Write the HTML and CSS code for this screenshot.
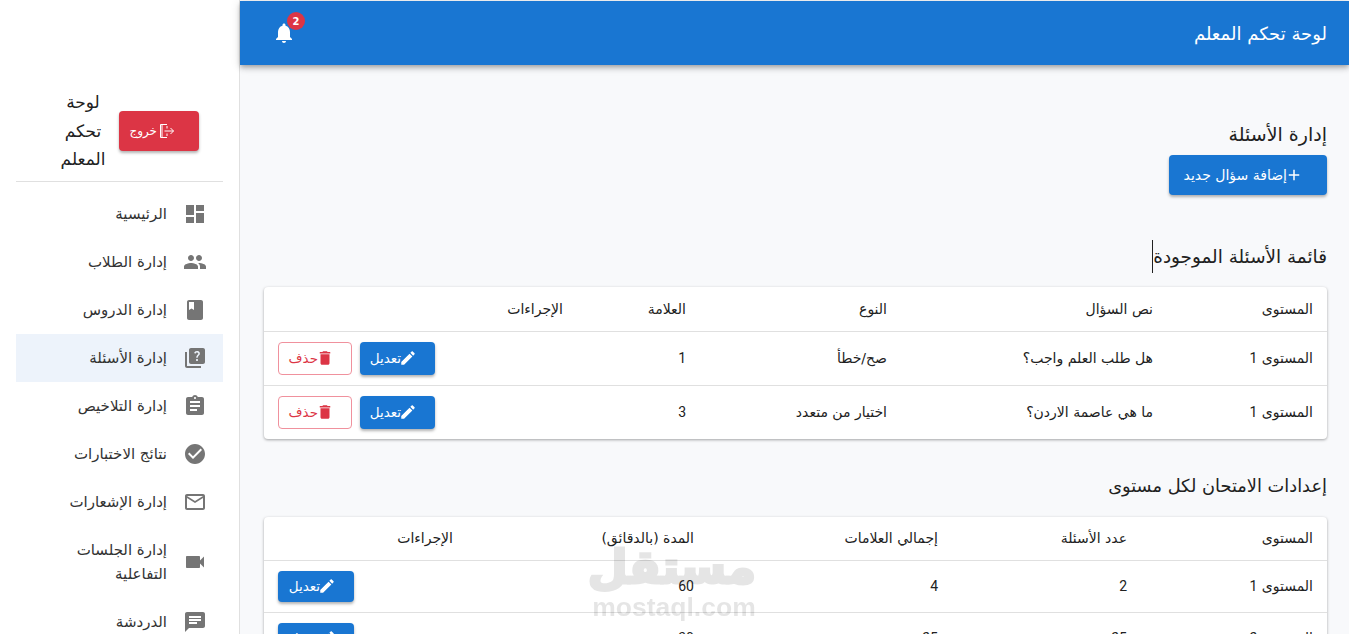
FILE: index.html
```
<!DOCTYPE html>
<html lang="ar" dir="rtl">
<head>
<meta charset="utf-8">
<title>لوحة تحكم المعلم</title>
<link rel="stylesheet" href="styles.css">
</head>
<body>
<div class="app">
  <main class="main">
    <header class="topbar">
      <h1 class="topbar-title">لوحة تحكم المعلم</h1>
      <div class="bell">
        <svg viewBox="0 0 24 24" class="bell-icon"><path d="M12 22c1.1 0 2-.9 2-2h-4c0 1.1.89 2 2 2zm6-6v-5c0-3.07-1.64-5.64-4.5-6.32V4c0-.83-.67-1.5-1.5-1.5s-1.5.67-1.5 1.5v.68C7.63 5.36 6 7.92 6 11v5l-2 2v1h16v-1l-2-2z"/></svg>
        <span class="badge">2</span>
      </div>
    </header>
    <div class="content">
      <h2 class="page-title">إدارة الأسئلة</h2>
      <button class="btn btn-blue btn-add"><svg viewBox="0 0 24 24" class="ico18"><path d="M19 13h-6v6h-2v-6H5v-2h6V5h2v6h6v2z"/></svg><span>إضافة سؤال جديد</span></button>

      <h3 class="section-title first"><span class="caret">قائمة الأسئلة الموجودة</span></h3>
      <div class="card">
        <table class="table q-table">
          <colgroup><col class="q1"><col class="q2"><col class="q3"><col class="q4"><col class="q5"></colgroup>
          <thead><tr><th>المستوى</th><th>نص السؤال</th><th>النوع</th><th>العلامة</th><th>الإجراءات</th></tr></thead>
          <tbody>
            <tr><td>المستوى <span class="num">1</span></td><td>هل طلب العلم واجب؟</td><td>صح/خطأ</td><td class="num">1</td><td><div class="actions">
              <button class="btn btn-blue btn-sm"><svg viewBox="0 0 24 24" class="ico18"><path d="M3 17.25V21h3.75L17.81 9.94l-3.75-3.75L3 17.25zM20.71 7.04c.39-.39.39-1.02 0-1.41l-2.34-2.34c-.39-.39-1.02-.39-1.41 0l-1.83 1.83 3.75 3.75 1.83-1.83z"/></svg><span>تعديل</span></button>
              <button class="btn btn-outline btn-sm"><svg viewBox="0 0 24 24" class="ico18"><path d="M6 19c0 1.1.9 2 2 2h8c1.1 0 2-.9 2-2V7H6v12zM19 4h-3.5l-1-1h-5l-1 1H5v2h14V4z"/></svg><span>حذف</span></button>
            </div></td></tr>
            <tr><td>المستوى <span class="num">1</span></td><td>ما هي عاصمة الاردن؟</td><td>اختيار من متعدد</td><td class="num">3</td><td><div class="actions">
              <button class="btn btn-blue btn-sm"><svg viewBox="0 0 24 24" class="ico18"><path d="M3 17.25V21h3.75L17.81 9.94l-3.75-3.75L3 17.25zM20.71 7.04c.39-.39.39-1.02 0-1.41l-2.34-2.34c-.39-.39-1.02-.39-1.41 0l-1.83 1.83 3.75 3.75 1.83-1.83z"/></svg><span>تعديل</span></button>
              <button class="btn btn-outline btn-sm"><svg viewBox="0 0 24 24" class="ico18"><path d="M6 19c0 1.1.9 2 2 2h8c1.1 0 2-.9 2-2V7H6v12zM19 4h-3.5l-1-1h-5l-1 1H5v2h14V4z"/></svg><span>حذف</span></button>
            </div></td></tr>
          </tbody>
        </table>
      </div>

      <h3 class="section-title second">إعدادات الامتحان لكل مستوى</h3>
      <div class="card">
        <table class="table s-table">
          <colgroup><col class="s1"><col class="s2"><col class="s3"><col class="s4"><col class="s5"></colgroup>
          <thead><tr><th>المستوى</th><th>عدد الأسئلة</th><th>إجمالي العلامات</th><th>المدة (بالدقائق)</th><th>الإجراءات</th></tr></thead>
          <tbody>
            <tr><td>المستوى <span class="num">1</span></td><td class="num">2</td><td class="num">4</td><td class="num">60</td><td><div class="actions">
              <button class="btn btn-blue btn-md"><svg viewBox="0 0 24 24" class="ico18"><path d="M3 17.25V21h3.75L17.81 9.94l-3.75-3.75L3 17.25zM20.71 7.04c.39-.39.39-1.02 0-1.41l-2.34-2.34c-.39-.39-1.02-.39-1.41 0l-1.83 1.83 3.75 3.75 1.83-1.83z"/></svg><span>تعديل</span></button>
            </div></td></tr>
            <tr><td>المستوى <span class="num">2</span></td><td class="num">25</td><td class="num">25</td><td class="num">30</td><td><div class="actions">
              <button class="btn btn-blue btn-md"><svg viewBox="0 0 24 24" class="ico18"><path d="M3 17.25V21h3.75L17.81 9.94l-3.75-3.75L3 17.25zM20.71 7.04c.39-.39.39-1.02 0-1.41l-2.34-2.34c-.39-.39-1.02-.39-1.41 0l-1.83 1.83 3.75 3.75 1.83-1.83z"/></svg><span>تعديل</span></button>
            </div></td></tr>
          </tbody>
        </table>
      </div>
    </div>
  </main>

  <aside class="sidebar">
    <div class="brand">
      <div class="brand-title">لوحة تحكم المعلم</div>
      <button class="btn btn-red btn-logout"><svg viewBox="0 0 20 20" class="ico-logout"><path d="M11 3.500H4.500v13H11M11 5v2.500M11 12.500V15M6 3.500v13"/><path d="M8.500 10h9M14.500 7l3 3-3 3"/></svg><span>خروج</span></button>
    </div>
    <nav class="nav">
      <a class="nav-item"><svg viewBox="0 0 24 24"><path d="M3 13h8V3H3v10zm0 8h8v-6H3v6zm10 0h8V11h-8v10zm0-18v6h8V3h-8z"/></svg><span>الرئيسية</span></a>
      <a class="nav-item"><svg viewBox="0 0 24 24"><path d="M16 11c1.66 0 2.99-1.34 2.99-3S17.66 5 16 5c-1.66 0-3 1.34-3 3s1.34 3 3 3zm-8 0c1.66 0 2.99-1.34 2.99-3S9.66 5 8 5C6.34 5 5 6.34 5 8s1.34 3 3 3zm0 2c-2.33 0-7 1.17-7 3.5V19h14v-2.5c0-2.33-4.67-3.5-7-3.5zm8 0c-.29 0-.62.02-.97.05 1.16.84 1.97 1.97 1.97 3.45V19h6v-2.5c0-2.33-4.67-3.5-7-3.5z"/></svg><span>إدارة الطلاب</span></a>
      <a class="nav-item"><svg viewBox="0 0 24 24"><path d="M18 2H6c-1.1 0-2 .9-2 2v16c0 1.1.9 2 2 2h12c1.1 0 2-.9 2-2V4c0-1.1-.9-2-2-2zM6 4h5v8l-2.5-1.5L6 12V4z"/></svg><span>إدارة الدروس</span></a>
      <a class="nav-item active"><svg viewBox="0 0 24 24"><path d="M4 6H2v14c0 1.1.9 2 2 2h14v-2H4V6zm16-4H8c-1.1 0-2 .9-2 2v12c0 1.1.9 2 2 2h12c1.1 0 2-.9 2-2V4c0-1.1-.9-2-2-2zm-5.99 13c-.59 0-1.05-.47-1.05-1.05 0-.59.47-1.04 1.05-1.04.59 0 1.04.45 1.04 1.04-.01.58-.45 1.05-1.04 1.05zm2.5-6.17c-.63.93-1.23 1.21-1.56 1.81-.13.24-.18.4-.18 1.18h-1.52c0-.41-.06-1.08.26-1.65.41-.73 1.18-1.16 1.63-1.8.48-.68.21-1.94-1.14-1.94-.88 0-1.32.67-1.5 1.23l-1.37-.57C11.51 5.96 12.52 5 13.99 5c1.23 0 2.08.56 2.51 1.26.37.61.58 1.73.01 2.57z"/></svg><span>إدارة الأسئلة</span></a>
      <a class="nav-item"><svg viewBox="0 0 24 24"><path d="M19 3h-4.18C14.4 1.84 13.3 1 12 1c-1.3 0-2.4.84-2.82 2H5c-1.1 0-2 .9-2 2v14c0 1.1.9 2 2 2h14c1.1 0 2-.9 2-2V5c0-1.1-.9-2-2-2zm-7 0c.55 0 1 .45 1 1s-.45 1-1 1-1-.45-1-1 .45-1 1-1zm2 14H7v-2h7v2zm3-4H7v-2h10v2zm0-4H7V7h10v2z"/></svg><span>إدارة التلاخيص</span></a>
      <a class="nav-item"><svg viewBox="0 0 24 24"><path d="M12 2C6.48 2 2 6.48 2 12s4.48 10 10 10 10-4.48 10-10S17.52 2 12 2zm-2 15l-5-5 1.41-1.41L10 14.17l7.59-7.59L19 8l-9 9z"/></svg><span>نتائج الاختبارات</span></a>
      <a class="nav-item"><svg viewBox="0 0 24 24"><path d="M20 4H4c-1.1 0-1.99.9-1.99 2L2 18c0 1.1.9 2 2 2h16c1.1 0 2-.9 2-2V6c0-1.1-.9-2-2-2zm0 14H4V8l8 5 8-5v10zM12 11L4 6h16l-8 5z"/></svg><span>إدارة الإشعارات</span></a>
      <a class="nav-item tall"><svg viewBox="0 0 24 24"><path d="M17 10.5V7c0-.55-.45-1-1-1H4c-.55 0-1 .45-1 1v10c0 .55.45 1 1 1h12c.55 0 1-.45 1-1v-3.5l4 4v-11l-4 4z"/></svg><span>إدارة الجلسات التفاعلية</span></a>
      <a class="nav-item"><svg viewBox="0 0 24 24"><path d="M20 2H4c-1.1 0-1.99.9-1.99 2L2 22l4-4h14c1.1 0 2-.9 2-2V4c0-1.1-.9-2-2-2zM6 9h12v2H6V9zm8 5H6v-2h8v2zm4-6H6V6h12v2z"/></svg><span>الدردشة</span></a>
    </nav>
  </aside>
</div>
<div class="watermark" dir="ltr">
  <div class="wm-ar" dir="rtl">مستقل</div>
  <div class="wm-en">mostaql.com</div>
</div>
</body>
</html>
```
FILE: styles.css
```
* { box-sizing: border-box; }
html, body { margin: 0; height: 100%; overflow: hidden; }
body {
  font-family: "DejaVu Sans", "Noto Sans", sans-serif;
  color: #212121;
  background: #f8f9fb;
  font-size: 14px;
}
.num { font-family: Roboto, sans-serif; }
.app { display: flex; flex-direction: row; height: 634px; overflow: hidden; }
.main { flex: 1; min-width: 0; display: flex; flex-direction: column; }
.sidebar {
  width: 240px;
  flex: none;
  background: #fff;
  border-right: 1px solid #e0e0e0;
  padding: 88px 16px 0 16px;
}
.topbar {
  height: 64px;
  margin-top: 1px;
  flex: none;
  background: #1976d2;
  color: #fff;
  display: flex;
  align-items: center;
  justify-content: space-between;
  padding: 0 22px 0 32px;
  box-shadow: 0 2px 4px -1px rgba(0,0,0,.2), 0 4px 5px 0 rgba(0,0,0,.14), 0 1px 10px 0 rgba(0,0,0,.12);
  z-index: 2;
}
.topbar-title { margin: 0; font-size: 18px; font-weight: 500; }
.bell { position: relative; width: 24px; height: 24px; }
.bell-icon { width: 24px; height: 24px; fill: #fff; display: block; }
.badge {
  position: absolute; top: -9px; left: 15px;
  width: 18px; height: 18px; border-radius: 50%;
  background: #dc3545; color: #fff; font-size: 10px; font-weight: 700;
  display: flex; align-items: center; justify-content: center;
}
.content { padding: 57px 22px 0 24px; }
.page-title { margin: 0 0 9px; font-size: 19px; font-weight: 400; line-height: 24px; }
.section-title { margin: 0; font-size: 18px; font-weight: 400; line-height: 24px; }
.first { margin-top: 50px; margin-bottom: 18px; font-size: 18.4px; }
.second { margin-top: 35px; margin-bottom: 19px; font-size: 17.8px; }
.caret { position: relative; display: inline-block; }
.caret::after {
  content: ""; position: absolute; left: -1px; top: -5px;
  width: 1px; height: 33px; background: #212121;
}
.btn {
  display: inline-flex; align-items: center; border: 0; border-radius: 4px;
  font-family: inherit; font-size: 14px; padding: 0;
}
.btn span { margin-right: -2px; }
.btn-blue { background: #1976d2; color: #fff; fill: #fff; box-shadow: 0 2px 3px rgba(0,0,0,.3); }
.btn-red { background: #dc3545; color: #fff; fill: #fff; box-shadow: 0 2px 3px rgba(0,0,0,.3); }
.btn-outline { background: #fff; color: #dc3545; fill: #dc3545; border: 1px solid #f0919d; }
.btn-add { width: 158px; height: 40px; padding-right: 24px; display: flex; }
.btn-sm { height: 33px; padding-right: 18px; font-size: 13.5px; }
.btn-blue.btn-sm { width: 75px; }
.btn-outline.btn-sm { width: 74px; padding-right: 17px; }
.btn-md { width: 76px; height: 31px; padding-right: 18px; font-size: 13.5px; }
.ico18 { width: 18px; height: 18px; flex: none; }
.ico-logout { width: 20px; height: 20px; flex: none; fill: none; stroke: #fff; stroke-width: 1; }
.card { background: #fff; border-radius: 4px; box-shadow: 0 1px 3px rgba(0,0,0,.35); overflow: hidden; }
.table { width: 100%; border-collapse: collapse; table-layout: fixed; }
.table th, .table td { padding: 0 14px; text-align: right; font-weight: 400; border-bottom: 1px solid #e0e0e0; font-size: 14px; }
.table tbody tr:last-child td { border-bottom: 0; }
.q-table th { height: 44px; }
.q-table td { height: 54px; }
.s-table th { height: 43px; }
.s-table td { height: 52px; }
.q1 { width: 160px; } .q2 { width: 266px; } .q3 { width: 201px; } .q4 { width: 123px; }
.s1 { width: 186px; } .s2 { width: 189px; } .s3 { width: 244px; } .s4 { width: 241px; }
.actions { display: flex; justify-content: flex-end; gap: 8px; }
.brand { display: flex; align-items: center; justify-content: flex-start; gap: 3px; padding: 0 0 7px 34px; border-bottom: 1px solid #e0e0e0; flex-direction: row-reverse; }
.brand-title { width: 66px; text-align: center; font-size: 17px; line-height: 28.5px; }
.btn-logout { width: 80px; height: 40px; padding-right: 23px; font-size: 12px; }
.btn-logout span { margin-right: -1px; }
.nav { display: flex; flex-direction: column; margin-top: 8px; }
.nav-item { display: flex; align-items: center; height: 48px; padding: 0 16px; gap: 16px; font-size: 15px; color: #333; }
.nav-item svg { width: 24px; height: 24px; fill: #757575; flex: none; }
.nav-item.tall { height: 72px; line-height: 24px; }
.nav-item.active { background: #edf3fb; }
.watermark { position: fixed; left: 592px; top: 542px; width: 164px; color: #000; opacity: .1; text-align: center; pointer-events: none; }
.wm-ar { font-size: 46px; font-weight: 700; line-height: 50px; -webkit-text-stroke: 3px #000; }
.wm-en { font-family: "Liberation Sans", sans-serif; font-size: 26.5px; font-weight: 700; line-height: 30px; }
```
